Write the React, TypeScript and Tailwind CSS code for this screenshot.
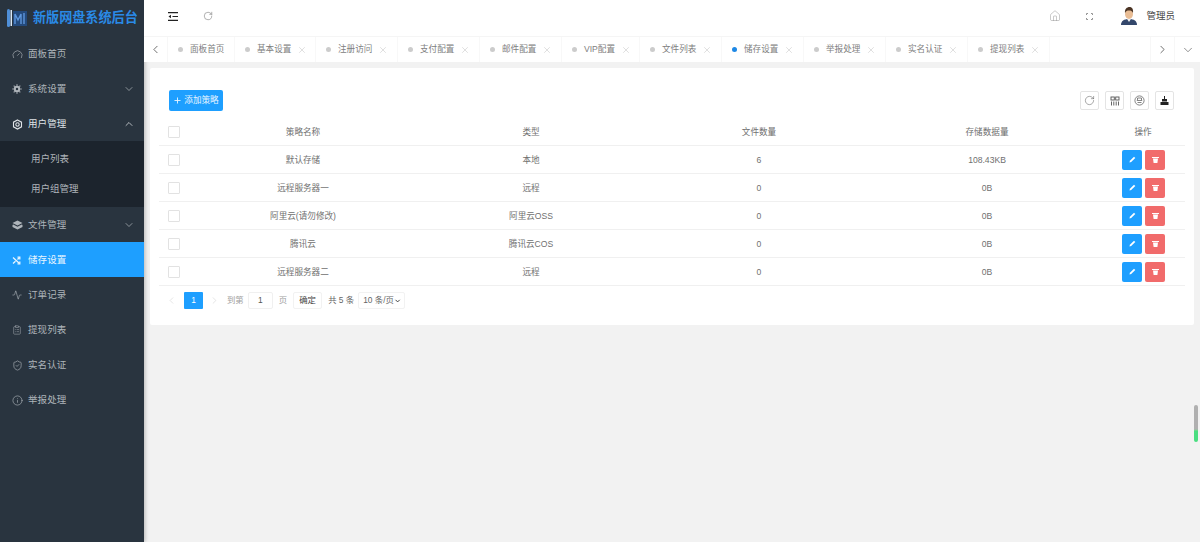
import React from "react";
import {
  Gauge, ChevronDown, ChevronUp, ChevronLeft, ChevronRight, Activity,
  ClipboardList, ShieldCheck, Info, RotateCw, Home, X, Plus,
} from "lucide-react";

const font = { fontFamily: '"Liberation Sans","Noto Sans CJK SC",sans-serif' };

function NavItem({ icon, label, arrow, active, bright }: { icon: React.ReactNode; label: string; arrow?: "up" | "down"; active?: boolean; bright?: boolean }) {
  return (
    <div className={`flex h-[35px] items-center pl-[12px] pr-[9px] pt-[1px] text-[9.5px] ${active ? "bg-[#1e9fff] text-[#e8f5ff]" : bright ? "text-[#dfe3e7]" : "text-[#aeb4ba]"}`}>
      <span className="flex w-[16px] items-center">{icon}</span>
      <span className="flex-1 tracking-[0.1px]">{label}</span>
      {arrow === "down" && <ChevronDown size={12} strokeWidth={1.5} className="text-[#aab0b6]" />}
      {arrow === "up" && <ChevronUp size={12} strokeWidth={1.5} className="text-[#dfe3e6]" />}
    </div>
  );
}

function GearIcon() {
  return (
    <svg width="10" height="10" viewBox="0 0 10 10" fill="none" stroke="currentColor">
      <circle cx="5" cy="5" r="2.200" strokeWidth="2" />
      <path d="M5 .3v1.500M5 8.200v1.500M.3 5h1.500M8.200 5h1.500M1.700 1.700l1 1M7.300 7.300l1 1M1.700 8.300l1-1M7.300 2.700l1-1" strokeWidth="1.100" />
    </svg>
  );
}

function HexIcon() {
  return (
    <svg width="11" height="11" viewBox="0 0 11 11" fill="none" stroke="currentColor" strokeWidth="1.100">
      <path d="M5.500 1L9.500 3.200V7.800L5.500 10L1.500 7.800V3.200z" />
      <circle cx="5.500" cy="5.500" r="1.700" />
    </svg>
  );
}

function StackIcon() {
  return (
    <svg width="11" height="10" viewBox="0 0 11 10" fill="currentColor">
      <path d="M5.500 .5L10.500 3 5.500 5.500.5 3z" />
      <path d="M1.200 4.600L5.500 6.800l4.300-2.200.7.400v2L5.500 9.500.5 7V5z" />
    </svg>
  );
}

function ShuffleMini() {
  return (
    <svg width="9" height="9" viewBox="0 0 9 9" fill="none" stroke="currentColor" strokeWidth="1.300">
      <path d="M1 1.500l6.500 6M1 7.500l2.500-2.300M5.500 3.500l2-2" />
      <path d="M5.500 1.200h2.300v2.300M5.500 7.800h2.300V5.500" />
    </svg>
  );
}

function Sidebar() {
  return (
    <aside className="flex h-full w-[144px] shrink-0 flex-col bg-[#29343f] shadow-[1px_0_4px_rgba(0,0,0,0.25)]">
      <div className="flex h-[36px] items-center gap-[6px] pl-[7px]">
        <svg width="20" height="20" viewBox="0 0 20 20">
          <rect x="0" y="1" width="3" height="18" rx="1.500" fill="#4f8fd8" />
          <rect x="3.500" y="2" width="1.500" height="16" fill="#d7e6f6" />
          <rect x="6" y="3" width="14" height="15" fill="#244a7c" />
          <path d="M8 16V6l3 6 3-6v10M17 5v11" stroke="#5f97dc" strokeWidth="1.400" fill="none" />
        </svg>
        <span className="whitespace-nowrap text-[13.1px] font-bold text-[#2a8ae6]">新版网盘系统后台</span>
      </div>
      <NavItem icon={<Gauge size={11} strokeWidth={1.4} />} label="面板首页" />
      <NavItem icon={<GearIcon />} label="系统设置" arrow="down" />
      <NavItem icon={<HexIcon />} label="用户管理" arrow="up" bright />
      <div className="flex h-[66px] flex-col bg-[#1c242d] pl-[31px] pt-[3px] text-[9.5px] text-[#aeb4ba]">
        <div className="flex h-[30px] items-center">用户列表</div>
        <div className="flex h-[30px] items-center">用户组管理</div>
      </div>
      <NavItem icon={<StackIcon />} label="文件管理" arrow="down" />
      <NavItem icon={<ShuffleMini />} label="储存设置" active />
      <NavItem icon={<Activity size={10} strokeWidth={1.5} />} label="订单记录" />
      <NavItem icon={<ClipboardList size={10} strokeWidth={1.2} />} label="提现列表" />
      <NavItem icon={<ShieldCheck size={11} strokeWidth={1.4} />} label="实名认证" />
      <NavItem icon={<Info size={11} strokeWidth={1.4} />} label="举报处理" />
    </aside>
  );
}

function Avatar() {
  return (
    <svg width="16" height="18" viewBox="0 0 16 18">
      <path d="M0 18c0-4 3-6 8-6s8 2 8 6z" fill="#33476b" />
      <path d="M6 12l2 3 2-3z" fill="#f1f1f1" />
      <ellipse cx="8" cy="7" rx="4" ry="5" fill="#e9bd95" />
      <path d="M4 6c-.5-4 2-6 4.500-6S12.500 2 12 6c-1-2-2-2.500-4-2.500S5 4 4 6z" fill="#4a3323" />
    </svg>
  );
}

function MenuFold() {
  return (
    <svg width="10" height="9" viewBox="0 0 10 9" fill="none" stroke="#222" strokeWidth="1.100">
      <path d="M0 .6h10M4.500 4.500H10M0 8.400h10" />
      <path d="M3 2.800L.5 4.500 3 6.200z" fill="#222" stroke="none" />
    </svg>
  );
}

function FullScreen() {
  return (
    <svg width="7" height="7" viewBox="0 0 7 7" fill="none" stroke="#888" strokeWidth="0.900">
      <path d="M.5 2V.5H2M5 .5h1.500V2M6.500 5v1.500H5M2 6.500H.5V5" />
    </svg>
  );
}

function Header() {
  return (
    <header className="flex h-[36px] shrink-0 items-center bg-white pb-[4px] pl-[24px] pr-[25px] text-[#555]">
      <MenuFold />
      <RotateCw size={10} strokeWidth={1.2} className="ml-[25px] text-[#666]" />
      <div className="flex-1" />
      <Home size={12} strokeWidth={0.9} className="text-[#888]" />
      <span className="ml-[25px] flex"><FullScreen /></span>
      <span className="ml-[28px] flex"><Avatar /></span>
      <span className="ml-[9px] text-[9.5px] text-[#444]">管理员</span>
    </header>
  );
}

const tabs: { name: string; w: string; close?: boolean; on?: boolean }[] = [
  { name: "面板首页", w: "w-[67px]" },
  { name: "基本设置", w: "w-[81px]", close: true },
  { name: "注册访问", w: "w-[82px]", close: true },
  { name: "支付配置", w: "w-[82px]", close: true },
  { name: "邮件配置", w: "w-[82px]", close: true },
  { name: "VIP配置", w: "w-[78px]", close: true },
  { name: "文件列表", w: "w-[82px]", close: true },
  { name: "储存设置", w: "w-[82px]", close: true, on: true },
  { name: "举报处理", w: "w-[82px]", close: true },
  { name: "实名认证", w: "w-[82px]", close: true },
  { name: "提现列表", w: "w-[82px]", close: true },
];

function Tabs() {
  return (
    <div className="flex h-[26px] shrink-0 items-stretch border-t border-[#f5f5f5] bg-white text-[8.6px] text-[#808080]">
      <div className="flex w-[24px] items-center justify-center border-r border-[#f7f7f7]">
        <ChevronLeft size={13} strokeWidth={1.4} className="text-[#444]" />
      </div>
      {tabs.map((t) => (
        <div key={t.name} className={`flex ${t.w} shrink-0 items-center border-r border-[#f8f8f8] pl-[10px]`}>
          <span className={`h-[5px] w-[5px] rounded-full ${t.on ? "bg-[#1e88e5]" : "bg-[#cccccc]"}`} />
          <span className="ml-[7px] whitespace-nowrap">{t.name}</span>
          {t.close && <X size={10} strokeWidth={0.9} className="ml-[6px] text-[#aaa]" />}
        </div>
      ))}
      <div className="flex-1" />
      <div className="flex w-[25px] items-center justify-center border-x border-[#f7f7f7]">
        <ChevronRight size={13} strokeWidth={1.4} className="text-[#444]" />
      </div>
      <div className="flex w-[25px] items-center justify-center">
        <ChevronDown size={14} strokeWidth={1.1} className="text-[#555]" />
      </div>
    </div>
  );
}

const rows = [
  ["默认存储", "本地", "6", "108.43KB"],
  ["远程服务器一", "远程", "0", "0B"],
  ["阿里云(请勿修改)", "阿里云OSS", "0", "0B"],
  ["腾讯云", "腾讯云COS", "0", "0B"],
  ["远程服务器二", "远程", "0", "0B"],
];

function Checkbox() {
  return <span className="block h-[12px] w-[12px] rounded-[1px] border border-[#e2e2e2] bg-white" />;
}

function ToolBtn({ children }: { children: React.ReactNode }) {
  return <button className="flex h-[19px] w-[19px] items-center justify-center rounded-[2px] border border-[#e4e4e4] bg-white text-[#555]">{children}</button>;
}

function Cell({ children }: { children: React.ReactNode }) {
  return <div className="flex w-[228px] items-center justify-center pt-[1px]">{children}</div>;
}

function Table() {
  return (
    <div className="text-[8.6px] text-[#707070]">
      <div className="flex h-[28px] items-center border-b border-[#f0f0f0]">
        <div className="flex w-[30px] justify-center"><Checkbox /></div>
        <Cell>策略名称</Cell>
        <Cell>类型</Cell>
        <Cell>文件数量</Cell>
        <Cell>存储数据量</Cell>
        <div className="flex flex-1 justify-center pt-[1px]">操作</div>
      </div>
      {rows.map((r) => (
        <div key={r[0]} className="flex h-[28px] items-center border-b border-[#f0f0f0]">
          <div className="flex w-[30px] justify-center"><Checkbox /></div>
          {r.map((c, i) => <Cell key={i}>{c}</Cell>)}
          <div className="flex flex-1 justify-center gap-[3px] pl-[1px]">
            <button className="flex h-[20px] w-[20px] items-center justify-center rounded-[2px] bg-[#1e9fff]">
              <svg width="7" height="7" viewBox="0 0 7 7"><path d="M.5 6.500l.4-1.700L5 .7l1.300 1.300L2.200 6.100z" fill="#fff" /></svg>
            </button>
            <button className="flex h-[20px] w-[20px] items-center justify-center rounded-[2px] bg-[#f16b6b]">
              <svg width="7" height="7" viewBox="0 0 7 7" fill="#fff"><path d="M0 1h7v1H0zM1 2.500h5L5.400 7H1.600z" /></svg>
            </button>
          </div>
        </div>
      ))}
    </div>
  );
}

function Pagination() {
  return (
    <div className="mt-[6px] flex h-[17px] items-center whitespace-nowrap pl-[7px] text-[8.4px] text-[#a0a0a0]">
      <ChevronLeft size={11} strokeWidth={1.1} className="text-[#ccc]" />
      <span className="ml-[7px] flex h-[17px] w-[19px] items-center justify-center rounded-[1px] bg-[#1e9fff] text-white">1</span>
      <ChevronRight size={11} strokeWidth={1.1} className="ml-[6px] text-[#ccc]" />
      <span className="ml-[7px]">到第</span>
      <span className="ml-[4px] flex h-[17px] w-[25px] items-center justify-center rounded-[2px] border border-[#f0f0f0] text-[#555]">1</span>
      <span className="ml-[6px]">页</span>
      <span className="ml-[6px] flex h-[17px] w-[29px] items-center justify-center rounded-[2px] border border-[#f2f2f2] text-[#444]">确定</span>
      <span className="ml-[6px] text-[#666]">共 5 条</span>
      <span className="ml-[4px] flex h-[17px] w-[47px] items-center justify-between rounded-[2px] border border-[#f2f2f2] pl-[4px] pr-[3px] text-[#666]">
        <span>10 条/页</span><ChevronDown size={8} strokeWidth={3} className="text-[#333]" />
      </span>
    </div>
  );
}

function Card() {
  return (
    <section className="mx-[6px] mt-[6px] h-[257px] rounded-[2px] bg-white px-[9px] pt-[22px]">
      <div className="flex h-[21px] items-center justify-between pl-[10px] pr-[11px]">
        <button className="flex h-[21px] w-[54px] items-center justify-center gap-[2px] rounded-[2px] bg-[#1e9fff] text-[8.6px] text-[#e8f5ff]">
          <Plus size={9} strokeWidth={2.4} />添加策略
        </button>
        <div className="flex gap-[6px]">
          <ToolBtn><RotateCw size={11} strokeWidth={1.1} /></ToolBtn>
          <ToolBtn>
            <svg width="10" height="10" viewBox="0 0 10 10" fill="none" stroke="#555" strokeWidth="0.900">
              <rect x="1" y="1" width="3.300" height="3" /><rect x="5.700" y="1" width="3.300" height="3" />
              <path d="M1.500 5.500v4M3.800 5.500v4M6.200 5.500v4M8.500 5.500v4" />
            </svg>
          </ToolBtn>
          <ToolBtn>
            <svg width="11" height="11" viewBox="0 0 11 11" fill="none" stroke="#666" strokeWidth="0.800">
              <circle cx="5.500" cy="5.500" r="4.600" />
              <path d="M3.500 5V3h4v2M2.800 5.500h5.400M3.500 7.500h4" />
            </svg>
          </ToolBtn>
          <ToolBtn>
            <svg width="11" height="11" viewBox="0 0 11 11"><path d="M1.500 7h8v3h-8zM3 6.500V4h5v2.500z" fill="#222" /><path d="M5.500 1v3" stroke="#222" strokeWidth="1" /></svg>
          </ToolBtn>
        </div>
      </div>
      <div className="mt-[7px]"><Table /></div>
      <Pagination />
    </section>
  );
}

export default function App() {
  return (
    <div style={font} className="relative flex h-[542px] w-[1200px] overflow-hidden bg-[#f2f2f2]">
      <Sidebar />
      <main className="flex min-w-0 flex-1 flex-col">
        <Header />
        <Tabs />
        <Card />
      </main>
      <div className="absolute left-[1194px] top-[405px] h-[37px] w-[4px] rounded-[2px] bg-gradient-to-b from-[#b0b0b0] from-65% to-[#4ade80] to-70%" />
    </div>
  );
}
